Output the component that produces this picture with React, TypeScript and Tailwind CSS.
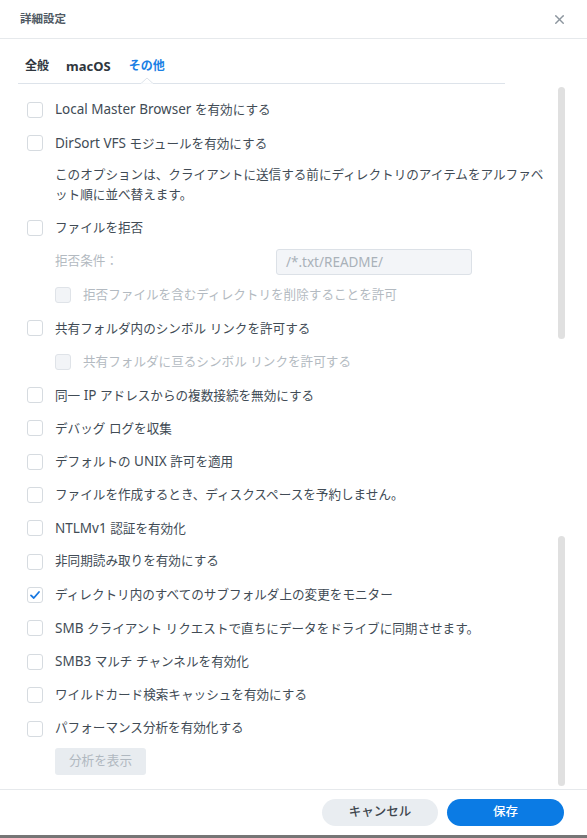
import { X } from 'lucide-react';

type Row =
  | { kind: 'check'; label: string; checked?: boolean }
  | { kind: 'sub'; label: string }
  | { kind: 'desc' }
  | { kind: 'reject' }
  | { kind: 'button' };

const rows: Row[] = [
  { kind: 'check', label: 'Local Master Browser を有効にする' },
  { kind: 'check', label: 'DirSort VFS モジュールを有効にする' },
  { kind: 'desc' },
  { kind: 'check', label: 'ファイルを拒否' },
  { kind: 'reject' },
  { kind: 'sub', label: '拒否ファイルを含むディレクトリを削除することを許可' },
  { kind: 'check', label: '共有フォルダ内のシンボル リンクを許可する' },
  { kind: 'sub', label: '共有フォルダに亘るシンボル リンクを許可する' },
  { kind: 'check', label: '同一 IP アドレスからの複数接続を無効にする' },
  { kind: 'check', label: 'デバッグ ログを収集' },
  { kind: 'check', label: 'デフォルトの UNIX 許可を適用' },
  { kind: 'check', label: 'ファイルを作成するとき、ディスクスペースを予約しません。' },
  { kind: 'check', label: 'NTLMv1 認証を有効化' },
  { kind: 'check', label: '非同期読み取りを有効にする' },
  { kind: 'check', label: 'ディレクトリ内のすべてのサブフォルダ上の変更をモニター', checked: true },
  { kind: 'check', label: 'SMB クライアント リクエストで直ちにデータをドライブに同期させます。' },
  { kind: 'check', label: 'SMB3 マルチ チャンネルを有効化' },
  { kind: 'check', label: 'ワイルドカード検索キャッシュを有効にする' },
  { kind: 'check', label: 'パフォーマンス分析を有効化する' },
  { kind: 'button' },
];

// latin runs sit a bit larger than the kana in the original ui font
const Mixed = ({ text }: { text: string }) => (
  <>
    {text.split(/([\x20-\x7e]+)/).map((part, i) =>
      /^[\x20-\x7e]+$/.test(part) ? (
        <span key={i} className="text-[13.5px]">
          {part}
        </span>
      ) : (
        <span key={i}>{part}</span>
      )
    )}
  </>
);

const Box = ({ checked, disabled }: { checked?: boolean; disabled?: boolean }) => (
  <span
    className={
      'flex h-[16px] w-[16px] shrink-0 items-center justify-center rounded-[3px] border ' +
      (disabled ? 'border-[#dfe3e8] bg-[#f2f4f7]' : 'border-[#d6dbe0] bg-white')
    }
  >
    {checked && (
      <svg width="12" height="12" viewBox="0 0 12 12" fill="none">
        <path d="M2 6.4 4.8 9 10 3" stroke="#1677e0" strokeWidth="1.8" strokeLinecap="round" strokeLinejoin="round" />
      </svg>
    )}
  </span>
);

const RowView = ({ row }: { row: Row }) => {
  if (row.kind === 'desc') {
    return (
      <div className="pl-[28px] pt-[5px] pb-[7px] text-[12.6px] leading-[20px] text-[#414b55]">
        このオプションは、クライアントに送信する前にディレクトリのアイテムをアルファベ
        <br />
        ット順に並べ替えます。
      </div>
    );
  }
  if (row.kind === 'reject') {
    return (
      <div className="flex h-[33.35px] items-center pl-[28px]">
        <span className="w-[221px] text-[12.6px] text-[#b3bac1]">拒否条件：</span>
        <div className="flex h-[26px] w-[196px] items-center rounded-[3px] border border-[#dce1e7] bg-[#f3f5f8] px-[9px] text-[13.5px] text-[#a9b1b9]">
          /*.txt/README/
        </div>
      </div>
    );
  }
  if (row.kind === 'button') {
    return (
      <div className="flex h-[33.35px] items-center pl-[28px]">
        <div className="flex h-[27px] w-[91px] items-center justify-center rounded-[3px] bg-[#e8ecf0] text-[12.6px] text-[#b0b8c0]">
          分析を表示
        </div>
      </div>
    );
  }
  if (row.kind === 'sub') {
    return (
      <div className="flex h-[33.35px] items-center gap-[12px] pl-[28px]">
        <Box disabled />
        <span className="text-[12.6px] text-[#b3bac1]">
          <Mixed text={row.label} />
        </span>
      </div>
    );
  }
  return (
    <div className="flex h-[33.35px] items-center gap-[12px]">
      <Box checked={row.checked} />
      <span className="text-[12.6px] text-[#414b55]">
        <Mixed text={row.label} />
      </span>
    </div>
  );
};

export default function App() {
  return (
    <div
      className="flex h-[838px] w-[587px] flex-col bg-white"
      style={{ fontFamily: '"Noto Sans", "Noto Sans CJK JP", sans-serif' }}
    >
      <div className="relative flex h-[835px] flex-col">
        {/* header */}
        <div className="flex h-[39px] shrink-0 items-center justify-between border-b border-[#e6e9ec] pl-[20px] pr-[20px]">
          <span className="text-[11.5px] font-semibold text-[#505a64]">詳細設定</span>
          <X size={15} strokeWidth={2.2} className="text-[#8c959e]" />
        </div>

        {/* tabs */}
        <div className="mx-[18px] mr-[82px] flex h-[45px] shrink-0 items-start border-b border-[#dde3ea] pt-[18px] text-[12px] font-bold leading-[18px]">
          <span className="ml-[7px] text-[#2f363d]">全般</span>
          <span className="ml-[17px] text-[13px] text-[#2f363d]">macOS</span>
          <span className="relative ml-[18px] h-full text-[#1a80e4]">
            その他
            <svg
              className="absolute bottom-[-1px] left-1/2 -translate-x-1/2"
              width="12"
              height="7"
              viewBox="0 0 12 7"
            >
              <path d="M0 6.5 6 1 12 6.5" fill="white" stroke="#dde3ea" strokeWidth="1" />
              <rect x="0" y="6.5" width="12" height="1" fill="white" />
            </svg>
          </span>
        </div>

        {/* content */}
        <div className="relative flex-1 overflow-hidden pl-[27px] pt-[9px]">
          {rows.map((row, i) => (
            <RowView key={i} row={row} />
          ))}
          <div className="absolute left-[558px] top-[3px] h-[252px] w-[7px] rounded-full bg-[#e0e0e0]" />
          <div className="absolute left-[558px] top-[452px] h-[250px] w-[7px] rounded-full bg-[#e0e0e0]" />
        </div>

        {/* footer */}
        <div className="flex h-[46px] shrink-0 items-start justify-end gap-[9px] border-t border-[#e6e9ec] pr-[23px] pt-[9px]">
          <button className="flex h-[27px] w-[116px] items-center justify-center rounded-full bg-[#e9edf1] text-[12.5px] font-medium text-[#3d454d]">
            キャンセル
          </button>
          <button className="flex h-[27px] w-[117px] items-center justify-center rounded-full bg-[#0b7be4] text-[12.5px] font-medium text-white">
            保存
          </button>
        </div>
      </div>
      <div className="h-[3px] bg-[#767676]" />
    </div>
  );
}
